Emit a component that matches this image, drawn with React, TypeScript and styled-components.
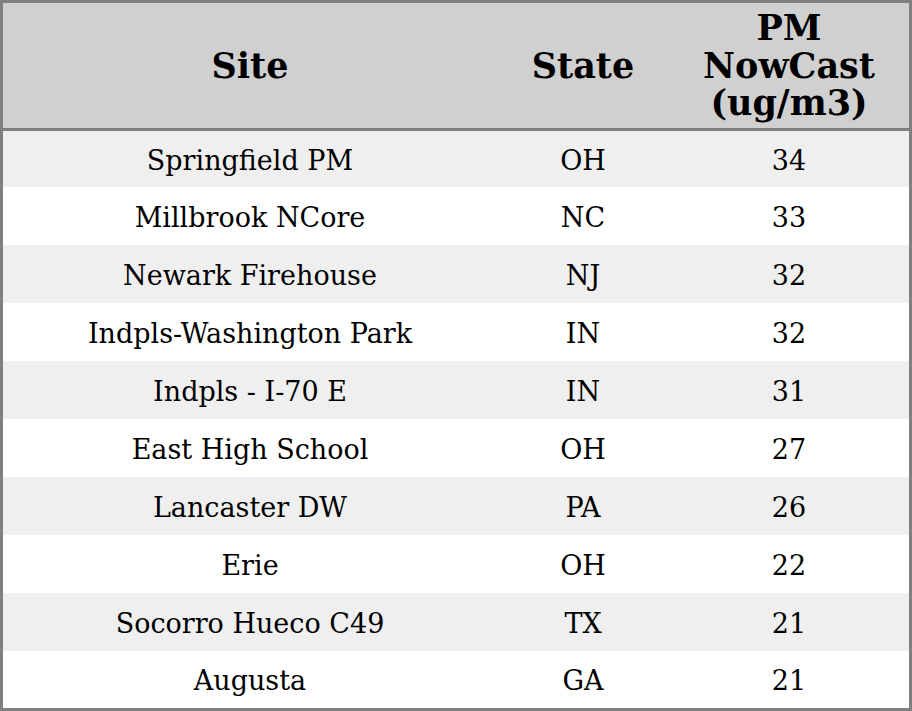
import styled, { createGlobalStyle } from 'styled-components';

type TRow = {
  site: string;
  state: string;
  value: number;
}

const rows: TRow[] = [
  { site: 'Springfield PM', state: 'OH', value: 34 },
  { site: 'Millbrook NCore', state: 'NC', value: 33 },
  { site: 'Newark Firehouse', state: 'NJ', value: 32 },
  { site: 'Indpls-Washington Park', state: 'IN', value: 32 },
  { site: 'Indpls - I-70 E', state: 'IN', value: 31 },
  { site: 'East High School', state: 'OH', value: 27 },
  { site: 'Lancaster DW', state: 'PA', value: 26 },
  { site: 'Erie', state: 'OH', value: 22 },
  { site: 'Socorro Hueco C49', state: 'TX', value: 21 },
  { site: 'Augusta', state: 'GA', value: 21 },
];

const GlobalStyle = createGlobalStyle`
  html, body {
    margin: 0;
    padding: 0;
    background: #ffffff;
  }
`;

const App = (): JSX.Element => {
  return (
    <>
      <GlobalStyle />
      <Table>
        <HeadCell>Site</HeadCell>
        <HeadCell>State</HeadCell>
        <HeadCell>PM NowCast (ug/m3)</HeadCell>
        {rows.map((row, i) => (
          <Row key={row.site} $striped={i % 2 === 0}>
            <Cell>{row.site}</Cell>
            <Cell>{row.state}</Cell>
            <Cell>{row.value}</Cell>
          </Row>
        ))}
      </Table>
    </>
  )
}

const Table = styled.div`
  box-sizing: border-box;
  width: 912px;
  height: 711px;
  border: 3px solid #808080;
  display: grid;
  grid-template-columns: 494px 172px 1fr;
  grid-template-rows: 128px 56px repeat(8, 58px) 57px;
  font-family: "DejaVu Serif", "Liberation Serif", serif;
  color: #000000;
`;

const HeadCell = styled.div`
  box-sizing: border-box;
  display: flex;
  align-items: center;
  justify-content: center;
  text-align: center;
  padding: 0 8px;
  background: #d0d0d0;
  border-bottom: 3px solid #808080;
  font-size: 35px;
  font-weight: bold;
  line-height: 37.5px;
`;

const Row = styled.div<{ $striped: boolean }>`
  display: contents;

  & > div {
    background: ${({ $striped }) => ($striped ? '#efefef' : '#ffffff')};
  }
`;

const Cell = styled.div`
  box-sizing: border-box;
  display: flex;
  align-items: center;
  justify-content: center;
  padding-top: 2px;
  font-size: 27px;
  line-height: 31px;
`;

export default App;
